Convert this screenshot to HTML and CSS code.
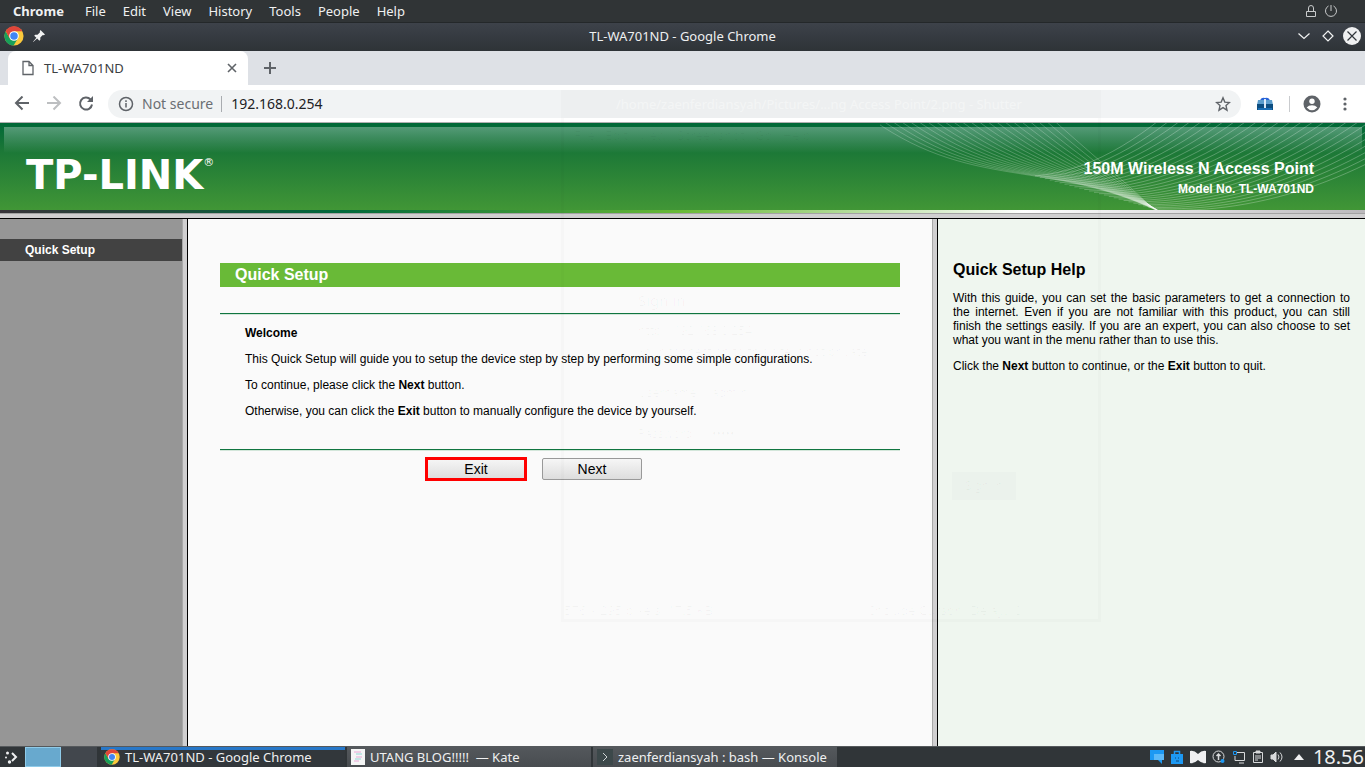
FILE: index.html
```html
<!DOCTYPE html>
<html lang="en">
<head>
<meta charset="utf-8">
<title>TL-WA701ND</title>
<link rel="stylesheet" href="styles.css">
</head>
<body>
<svg class="defs" width="0" height="0" aria-hidden="true">
  <symbol id="chrome" viewBox="0 0 48 48">
    <circle cx="24" cy="24" r="23" fill="#fbc93c"/>
    <path d="M24 24 4 12.5A23 23 0 0 1 44 12.5H24Z" fill="#e0453a"/>
    <path d="M4 12.5A23 23 0 0 0 23 47L33.5 29.5 24 24 14 29.5Z" fill="#17a05a"/>
    <path d="M4 12.5 14 30 24 12.5Z" fill="#e0453a"/>
    <circle cx="24" cy="24" r="11.5" fill="#fff"/>
    <circle cx="24" cy="24" r="9" fill="#4285f4"/>
  </symbol>
</svg>

<nav class="menubar">
  <button class="menu-app">Chrome</button>
  <button>File</button><button>Edit</button><button>View</button><button>History</button><button>Tools</button><button>People</button><button>Help</button>
  <span class="menu-status">
    <svg width="12" height="14" viewBox="0 0 12 14" fill="none" stroke="#c9cbcc"><path d="M1.5 7.5h9v5h-9zM3.500 7V4a2.500 2.500 0 0 1 5 0v3"/></svg>
    <svg width="14" height="14" viewBox="0 0 14 14" fill="none" stroke="#c9cbcc"><path d="M4.500 2A5.500 5.500 0 1 0 9.500 2M7 1v6"/></svg>
  </span>
</nav>

<header class="titlebar">
  <span class="title-side">
    <svg width="20" height="20"><use href="#chrome"/></svg>
    <svg width="14" height="14" viewBox="0 0 14 14"><path d="M8.500 1 13 5.500 11.800 6.200 10.800 6 8.300 8.500 8.300 10.800 7.300 11.800 5.200 9.600 1.200 13 1 12.800 4.400 8.800 2.200 6.700 3.200 5.700 5.500 5.700 8 3.200 7.800 2.200Z" fill="#f2f3f3"/></svg>
  </span>
  <span class="title-text">TL-WA701ND - Google Chrome</span>
  <span class="title-side title-end">
    <svg width="12" height="12" viewBox="0 0 12 12" fill="none" stroke="#f2f3f3" stroke-width="1.200"><path d="m.5 3.500 5.500 5 5.500-5"/></svg>
    <svg width="12" height="12" viewBox="0 0 12 12" fill="none" stroke="#f2f3f3" stroke-width="1.200"><path d="m6 1 5 5-5 5-5-5z"/></svg>
    <svg width="18" height="18" viewBox="0 0 18 18"><circle cx="9" cy="9" r="9" fill="#eff0f1"/><path d="m4.500 4.500 9 9m0-9-9 9" stroke="#31363b" stroke-width="1.200"/></svg>
  </span>
</header>

<div class="tabstrip">
  <div class="tab">
    <svg width="12" height="16" viewBox="0 0 12 16" fill="none" stroke="#5f6368" stroke-width="1.300"><path d="M1 1.500h6l4 4v9H1zM7 1.500v4h4"/></svg>
    <span class="tab-title">TL-WA701ND</span>
    <button aria-label="Close tab"><svg width="10" height="10" viewBox="0 0 10 10" stroke="#5f6368" stroke-width="1.600"><path d="m1 1 8 8m0-8-8 8"/></svg></button>
  </div>
  <button class="new-tab" aria-label="New tab"><svg width="12" height="12" viewBox="0 0 12 12" stroke="#5f6368" stroke-width="2"><path d="M6 0v12M0 6h12"/></svg></button>
</div>

<div class="toolbar">
  <button aria-label="Back"><svg width="16" height="16" viewBox="0 0 16 16" fill="none" stroke="#5f6368" stroke-width="2"><path d="M15 7H2m6.500-6.500L2 7l6.500 6.500"/></svg></button>
  <button aria-label="Forward"><svg width="16" height="16" viewBox="0 0 16 16" fill="none" stroke="#bdbfc1" stroke-width="2"><path d="M1 7h13M7.500 .5 14 7l-6.500 6.500"/></svg></button>
  <button aria-label="Reload"><svg width="16" height="16" viewBox="0 0 16 16"><path d="M12.500 3.500A6 6 0 1 0 14 8.500" fill="none" stroke="#5f6368" stroke-width="2"/><path d="M15 0v6H9z" fill="#5f6368"/></svg></button>
  <div class="omnibox">
    <svg width="16" height="16" viewBox="0 0 16 16" fill="none" stroke="#5f6368" stroke-width="1.500"><circle cx="8" cy="8" r="6.500"/><path d="M8 7v4.500M8 4.300V6"/></svg>
    <label for="address">Not secure</label>
    <input id="address" type="text" value="192.168.0.254">
    <svg width="16" height="16" viewBox="0 0 16 16" fill="none" stroke="#5f6368" stroke-width="1.400"><path d="m8 1.800 1.800 4.300 4.700.4-3.500 3.100 1 4.600-4-2.500-4 2.500 1-4.600L1.500 6.500l4.700-.4z"/></svg>
  </div>
  <svg class="extension" width="16" height="16" viewBox="0 0 16 16"><path d="M3 5Q4 1 8 2q4-1 5 3z" fill="#2763d8"/><path d="M1 4h14l1 5H0z" fill="#5c9dcc"/><path d="M0 8h16v6H0z" fill="#0c4d80"/><path d="M1 12h14v2H1z" fill="#1a6eb4"/><path d="M8 3v9" stroke="#dceaf7" stroke-width="2" fill="none"/></svg>
  <span class="divider"></span>
  <button aria-label="Profile"><svg width="18" height="18" viewBox="0 0 18 18"><circle cx="9" cy="9" r="8.500" fill="#5f6368"/><circle cx="9" cy="6.300" r="2.700" fill="#fff"/><path d="M3.700 12.500Q5.500 10.200 9 10.200T14.300 12.500Q12 15.200 9 15.200T3.700 12.500Z" fill="#fff"/></svg></button>
  <button aria-label="Menu"><svg width="4" height="14" viewBox="0 0 4 14" fill="#5f6368"><circle cx="2" cy="2" r="1.600"/><circle cx="2" cy="7" r="1.600"/><circle cx="2" cy="12" r="1.600"/></svg></button>
</div>

<div class="banner">
  <div class="banner-art">
    <svg id="waves" class="waves" width="485" height="87" viewBox="880 123 485 87" fill="none" stroke="#fff" aria-hidden="true"></svg>
    <div class="brand">TP-LINK<sup>®</sup></div>
    <div class="product"><strong>150M Wireless N Access Point</strong><span>Model No. TL-WA701ND</span></div>
  </div>
  <div class="banner-stripe"></div>
  <div class="banner-edge"></div>
</div>

<div class="frames">
  <aside class="sidebar"><a href="#">Quick Setup</a></aside>
  <main class="content">
    <h1>Quick Setup</h1>
    <section class="panel">
      <p><b>Welcome</b></p>
      <p>This Quick Setup will guide you to setup the device step by step by performing some simple configurations.</p>
      <p>To continue, please click the <b>Next</b> button.</p>
      <p>Otherwise, you can click the <b>Exit</b> button to manually configure the device by yourself.</p>
    </section>
    <div class="actions"><button class="marked">Exit</button><button>Next</button></div>
  </main>
  <aside class="help">
    <h2>Quick Setup Help</h2>
    <p>With this guide, you can set the basic parameters to get a connection to the internet. Even if you are not familiar with this product, you can still finish the settings easily. If you are an expert, you can also choose to set what you want in the menu rather than to use this.</p>
    <p>Click the <b>Next</b> button to continue, or the <b>Exit</b> button to quit.</p>
  </aside>
</div>

<footer class="taskbar">
  <svg class="launcher" width="14" height="14" viewBox="0 0 14 14" fill="#eff0f1"><circle cx="3.500" cy="3" r="1.500"/><circle cx="2" cy="7.500" r="1"/><circle cx="5.500" cy="12" r="1.700"/><path d="m8 3 4 4-4 4" stroke="#eff0f1" stroke-width="2" fill="none"/></svg>
  <span class="pager"><i class="current"></i><i></i></span>
  <button class="task active"><svg width="16" height="16"><use href="#chrome"/></svg>TL-WA701ND - Google Chrome</button>
  <button class="task"><svg width="14" height="16" viewBox="0 0 14 16"><path d="M0 0h14v16H0z" fill="#f4f5f5"/><path d="M3 3h7M5 8h6M3 12h5" stroke="#e9a6d5"/><path d="M5 5h6M4 10h6" stroke="#8fd8d5"/></svg>UTANG BLOG!!!!!&nbsp; — Kate</button>
  <button class="task"><svg width="16" height="16" viewBox="0 0 16 16"><path d="M0 0h16v16H0z" fill="#3c484a"/><path d="m6 4 4 4-4 4" stroke="#cfd5d6" fill="none"/></svg>zaenferdiansyah : bash — Konsole</button>
  <span class="tray">
    <svg width="14" height="14" viewBox="0 0 14 14"><path d="M0 0h14v10h-2v4L8 10H0z" fill="#1d99f3"/><path d="M4 4h10v6H4z" fill="#5cb9f8"/></svg>
    <svg width="14" height="14" viewBox="0 0 14 14"><path d="M1 4h12v10H1z" fill="#1d99f3"/><path d="M4.500 4V1.500h5V4" fill="none" stroke="#1d99f3" stroke-width="1.500"/><path d="M5 8h1M8 8h1M6 11h3" stroke="#10497a"/></svg>
    <svg width="16" height="14" viewBox="0 0 16 14"><path d="M0 1q4-1 8 3 4-4 8-3v12q-4 1-8-3-4 4-8 3z" fill="#eff0f1"/></svg>
    <svg width="14" height="14" viewBox="0 0 14 14" fill="none" stroke="#d8dadb"><circle cx="6.500" cy="6.500" r="5.500"/><path d="M6.500 10V4M4.500 6l2-2 2 2" stroke-width="1.500"/><circle cx="10.500" cy="11" r="2" fill="#1d99f3" stroke="none"/></svg>
    <svg width="14" height="14" viewBox="0 0 14 14" fill="none" stroke="#d8dadb"><path d="M5 2.500h7.500v8H3V6M7 13h5"/><path d="M1.500 1.500h3v3h-3z" stroke="#1d99f3"/></svg>
    <svg width="12" height="14" viewBox="0 0 12 14" fill="none" stroke="#d8dadb"><path d="M1.500 2.500h9v10h-9zM3 6h6M3 8h6M3 10h3"/><path d="M4 1h4v2H4z" fill="#d8dadb"/></svg>
    <svg width="14" height="14" viewBox="0 0 14 14" fill="none" stroke="#d8dadb"><path d="M1 5h2l3-3v10L3 9H1z" fill="#d8dadb"/><path d="M8 4.500q2 2.500 0 5M10 2.500q4 4.500 0 9"/></svg>
    <svg class="expand" width="10" height="6" viewBox="0 0 10 6"><path d="M0 6 5 0l5 6z" fill="#eff0f1"/></svg>
  </span>
  <time>18.56</time>
</footer>

<div class="fading-window" aria-hidden="true">
  <div class="fading-title">/home/zaenferdiansyah/Pictures/...ng Access Point/2.png - Shutter</div>
  <div class="fading-menu">File &nbsp; Edit &nbsp; View &nbsp; Screenshot &nbsp; Go &nbsp; Help</div>
  <div class="fading-dialog">
    <h3>Sign in</h3>
    <p>http://192.168.0.254</p>
    <p>Your connection to this site is not private</p>
    <div class="fading-row"><span>Username</span><span>admin</span></div>
    <div class="fading-row"><span>Password</span><span>•••••</span></div>
    <div class="fading-sign">Sign in</div>
  </div>
  <div class="fading-status"><span>576 x 295 pixels&nbsp; 17.5 KB</span><span>Include Cursor &nbsp; Delay: &nbsp;0</span></div>
</div>
<script src="script.js"></script>
</body>
</html>
```

FILE: styles.css
```css
* { box-sizing: border-box; }
body {
  margin: 0;
  height: 100vh;
  display: flex;
  flex-direction: column;
  overflow: hidden;
  font-family: "Noto Sans", sans-serif;
  font-size: 13px;
}
button { font: inherit; color: inherit; border: 0; padding: 0; background: none; }
svg { display: block; flex: none; }
.defs { position: absolute; }

.menubar {
  flex: none;
  height: 23px;
  display: flex;
  align-items: center;
  gap: 17px;
  padding: 0 27px 0 13px;
  background: #303436;
  border-bottom: 1px solid #24282a;
  color: #eff0f1;
}
.menu-app { font-weight: bold; margin-right: 4px; }
.menu-status { margin-left: auto; display: flex; gap: 7px; }

.titlebar {
  flex: none;
  height: 28px;
  display: flex;
  align-items: center;
  padding: 0 4px 2px;
  background: linear-gradient(#3d424a, #2e3337);
  color: #eff0f1;
}
.title-side { flex: 1; display: flex; align-items: center; gap: 8px; }
.title-end { justify-content: flex-end; gap: 12px; }
.title-end svg:last-child { margin-left: -3px; }

.tabstrip { flex: none; height: 34px; display: flex; padding-left: 8px; background: #dee1e6; }
.tab {
  width: 240px;
  display: flex;
  align-items: center;
  gap: 10px;
  padding: 0 11px 0 14px;
  background: #fff;
  border-radius: 8px 8px 0 0;
  color: #3c4043;
}
.tab-title { flex: 1; }
.new-tab { padding: 0 16px; }

.toolbar {
  flex: none;
  height: 37px;
  display: flex;
  align-items: center;
  gap: 16px;
  padding: 0 18px 0 14px;
  background: #fff;
}
.omnibox {
  flex: 1;
  height: 28px;
  display: flex;
  align-items: center;
  gap: 8px;
  padding: 0 10px;
  margin-left: -2px;
  border-radius: 14px;
  background: #f1f3f4;
  font-size: 14px;
}
.omnibox label { color: #6a6e73; padding-right: 8px; line-height: 16px; border-right: 1px solid #a9acb0; }
.omnibox input { flex: 1; min-width: 0; border: 0; padding: 0 0 0 1px; background: none; font: inherit; color: #202124; outline: 0; }
.divider { width: 1px; height: 16px; background: #c9cbce; margin-right: -3px; }
.toolbar button:last-child { margin-left: 6px; }

.banner { flex: none; border-top: 1px solid #b0b0b0; font-family: "Liberation Sans", Arial, sans-serif; }
.banner-art {
  position: relative;
  height: 87px;
  display: flex;
  align-items: flex-end;
  justify-content: space-between;
  padding: 0 51px 11px 26px;
  background: linear-gradient(#006837 0, #1b7737 27px, #419636 100%);
  color: #fff;
}
.banner-art::before {
  content: "";
  position: absolute;
  inset: 4px 3px auto 4px;
  height: 26px;
  background: linear-gradient(rgba(255, 255, 255, .32), rgba(255, 255, 255, 0));
}
.waves { position: absolute; top: 0; right: 0; }
.brand { position: relative; font: bold 40px/48px "DejaVu Sans", sans-serif; display: flex; }
.brand sup { font-size: 11px; line-height: 24px; font-weight: normal; }
.product { position: relative; display: flex; flex-direction: column; align-items: flex-end; font-weight: bold; font-size: 12px; line-height: 20px; }
.product strong { font-size: 16px; }
.banner-stripe { height: 3px; background: linear-gradient(90deg, #38343a, #00683a 25%, #69ba37 50%, #fff 75%, #bbb9bc); }
.banner-edge { height: 6px; background: #d0cfd0; border-top: 1px solid #a3a3a3; border-bottom: 1px solid #000; }

.frames { flex: 1; min-height: 0; display: flex; font: 12px/14px "Liberation Sans", Arial, sans-serif; color: #000; }
.sidebar { flex: none; width: 182px; padding-top: 20px; background: #969696; }
.sidebar a { display: block; padding: 0 25px; line-height: 22px; background: #424242; color: #fff; font-weight: bold; text-decoration: none; }
.content { flex: 1; padding: 44px 32px; background: #fafafa; }
.content, .help { position: relative; border-left: 1px solid #000; margin-left: 5px; box-shadow: -4px 0 #d0cfd0, -5px 0 #a8a8a8; }
.content h1 { margin: 0 0 26px; max-width: 680px; padding-left: 15px; font-size: 16px; line-height: 24px; background: #69ba37; color: #fff; }
.panel { max-width: 680px; padding: 12px 25px 31px; border-top: 1px solid #107540; border-bottom: 1px solid #107540; box-shadow: 0 1px #d3e6da, inset 0 1px #d3e6da; }
.panel p { margin: 0; }
.panel p + p { margin-top: 12px; }
.actions { display: flex; justify-content: center; gap: 16px; max-width: 680px; padding: 8px 52px 0 0; }
.actions button { width: 100px; height: 22px; border: 1px solid #999; border-radius: 2px; background: linear-gradient(#f6f6f6, #ddd); font-size: 14px; }
.actions .marked { border-radius: 0; outline: 3px solid #f00; outline-offset: -2px; }
.help { flex: none; width: 428px; padding: 42px 15px 0; background: #eff6ef; text-align: justify; }
.help h2 { margin: 0 0 13px; font-size: 16px; line-height: 17px; text-align: left; }
.help p { margin: 0 0 12px; }

.taskbar {
  flex: none;
  height: 21px;
  display: flex;
  align-items: center;
  background: #303538;
  border-top: 1px solid #55595c;
  color: #eff0f1;
}
.launcher { margin: 0 7px 0 4px; }
.pager { display: flex; align-self: stretch; }
.pager i { width: 36px; background: #42474d; }
.pager .current { background: #68a9ce; border: 1px solid #8fcbe9; }
.task {
  width: 244px;
  align-self: stretch;
  display: flex;
  align-items: center;
  gap: 5px;
  margin-left: 2px;
  padding-left: 4px;
  background: linear-gradient(#54585c, #484c50);
  white-space: nowrap;
}
.task.active { margin-left: 4px; padding-left: 3px; background: linear-gradient(#2777c8 3px, #32373b 3px); }
.tray { margin-left: auto; display: flex; align-items: center; gap: 6px; }
.expand { margin: 0 4px; }
time { font-size: 20px; line-height: 20px; margin: 0 1px 0 5px; }

/* A window caught part-way through its closing fade. */
.fading-window {
  position: absolute;
  left: 561px;
  top: 90px;
  width: 540px;
  height: 532px;
  display: flex;
  flex-direction: column;
  border: solid rgba(0, 0, 0, .016);
  border-width: 0 3px 3px;
  color: rgba(0, 0, 0, .03);
  pointer-events: none;
}
.fading-title { height: 28px; line-height: 28px; padding-left: 52px; background: rgba(0, 0, 0, .014); color: rgba(255, 255, 255, .4); white-space: nowrap; }
.fading-menu { padding: 8px 10px; }
.fading-dialog { margin: 138px 82px auto 74px; font-size: 12px; }
.fading-dialog h3 { margin: 0 0 12px; font-size: 15px; font-weight: normal; line-height: 20px; }
.fading-dialog p { margin: 0 0 4px; }
.fading-row { display: grid; grid-template-columns: 74px 1fr; margin-top: 24px; }
.fading-sign { width: 64px; line-height: 28px; margin: 30px 0 0 auto; text-align: center; background: rgba(0, 0, 80, .014); }
.fading-status { display: flex; justify-content: space-between; padding-right: 76px; }
```

FILE: script.js
```js
// Banner ribbon: two families of curves, each blended between an outer and an inner curve.
const families = [
  { from: [862, 112, 970, 195, 1050, 155, 1168, 216], to: [1040, 108, 1100, 162, 1128, 184, 1150, 206], count: 22, opacity: 0.22 },
  { from: [1035, 176, 1100, 170, 1150, 130, 1195, 90], to: [1158, 210, 1260, 214, 1370, 180, 1480, 90], count: 26, opacity: 0.26 }
];
const waves = document.getElementById("waves");
for (const { from, to, count, opacity } of families) {
  for (let i = 0; i < count; i++) {
    const t = i / (count - 1);
    const p = from.map((v, k) => Math.round((v + (to[k] - v) * t) * 10) / 10);
    const path = document.createElementNS("http://www.w3.org/2000/svg", "path");
    path.setAttribute("d", `M${p[0]} ${p[1]}C${p.slice(2).join(" ")}`);
    path.setAttribute("stroke-opacity", opacity);
    waves.append(path);
  }
}
```
